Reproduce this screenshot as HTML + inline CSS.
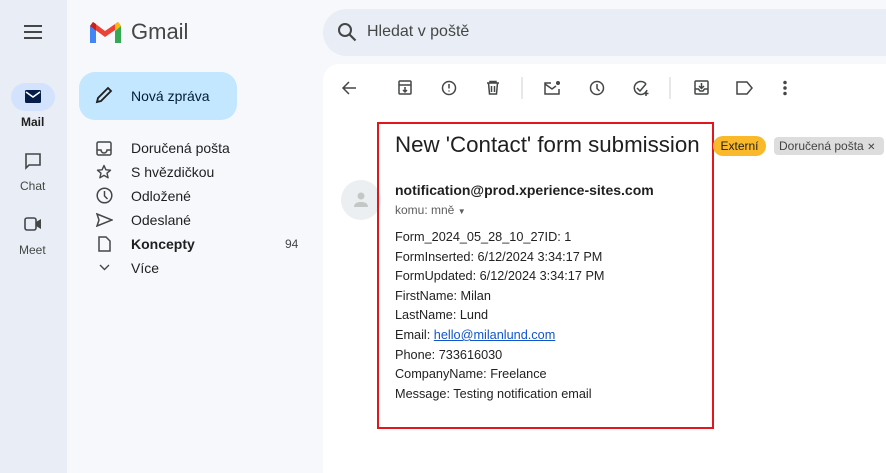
<!DOCTYPE html>
<html><head><meta charset="utf-8"><style>
*{margin:0;padding:0;box-sizing:border-box}
html,body{width:886px;height:473px;overflow:hidden}
body{background:#f6f8fc;font-family:"Liberation Sans",Arial,sans-serif;color:#1f1f1f;position:relative}
.rail{position:absolute;left:0;top:0;width:67px;height:473px;background:#e9eef6}
.abs{position:absolute}
.nav{position:absolute;left:131px;font-size:14px;color:#1f1f1f}
.ic{position:absolute;left:96px}
.panel{position:absolute;left:323px;top:64px;width:563px;height:409px;background:#fff;border-radius:16px 0 0 0}
.body div{font-size:12.7px;line-height:19.6px;color:#222}
</style></head><body>
<div class="rail"></div>
<svg class="abs" style="left:23px;top:24px" width="20" height="16"><path d="M1 2h18M1 8h18M1 14h18" stroke="#444746" stroke-width="2"/></svg>
<div class="abs" style="left:11px;top:83px;width:44px;height:28px;border-radius:14px;background:#d3e3fd"></div>
<svg class="abs" style="left:25px;top:90px" width="16" height="13"><rect width="16" height="13" rx="1.5" fill="#041e49"/><path d="M1 2l7 5 7-5" stroke="#fff" stroke-width="1.6" fill="none"/></svg>
<div class="abs" style="left:21px;top:115px;font-size:12px;font-weight:bold">Mail</div>
<svg class="abs" style="left:24px;top:152px" width="18" height="18"><path d="M2 2h14v11H5l-3 3z" stroke="#444746" stroke-width="1.6" fill="none"/></svg>
<div class="abs" style="left:20px;top:179px;font-size:12px;color:#444746">Chat</div>
<svg class="abs" style="left:24px;top:217px" width="18" height="14"><rect x="1" y="1" width="11" height="12" rx="2" stroke="#444746" stroke-width="1.6" fill="none"/><path d="M12 5l5-3v10l-5-3z" fill="#444746"/></svg>
<div class="abs" style="left:19px;top:243px;font-size:12px;color:#444746">Meet</div>

<svg class="abs" style="left:90px;top:22px" width="31" height="22"><path d="M0 4v17h6V9z" fill="#4285f4"/><path d="M25 9v12h6V4z" fill="#34a853"/><path d="M0 4l15 11L31 4 28 0 15 9 3 0z" fill="#ea4335"/><path d="M25 9l6-5-3-4-3 2z" fill="#fbbc04"/><path d="M0 4l6 5V2L3 0z" fill="#c5221f"/></svg>
<div class="abs" style="left:131px;top:19px;font-size:22px;color:#444746">Gmail</div>

<div class="abs" style="left:79px;top:72px;width:158px;height:48px;border-radius:16px;background:#c2e7ff"></div>
<svg class="abs" style="left:95px;top:86px" width="18" height="18"><path d="M2 16l1-4L13 2l3 3L6 15z" stroke="#1f1f1f" stroke-width="1.8" fill="none"/></svg>
<div class="abs" style="left:131px;top:88px;font-size:14px;color:#001d35">Nová zpráva</div>

<svg class="ic" style="top:141px" width="16" height="15"><rect x="1" y="1" width="14" height="13" rx="1.5" stroke="#444746" stroke-width="1.5" fill="none"/><path d="M1 9h4a3 3 0 006 0h4" stroke="#444746" stroke-width="1.5" fill="none"/></svg>
<div class="nav" style="top:140px">Doručená pošta</div>
<svg class="ic" style="top:164px" width="16" height="16"><path d="M8 1.5l1.9 4.3 4.6.4-3.5 3 1.1 4.6L8 11.4l-4.1 2.4L5 9.2l-3.5-3 4.6-.4z" stroke="#444746" stroke-width="1.4" fill="none" stroke-linejoin="round"/></svg>
<div class="nav" style="top:164px">S hvězdičkou</div>
<svg class="ic" style="top:187px" width="17" height="17"><circle cx="8.5" cy="8.5" r="7.3" stroke="#444746" stroke-width="1.5" fill="none"/><path d="M8.5 4v5l3 3" stroke="#444746" stroke-width="1.5" fill="none"/></svg>
<div class="nav" style="top:188px">Odložené</div>
<svg class="ic" style="top:213px" width="17" height="14"><path d="M1 1l15 6-15 6 2-6z" stroke="#444746" stroke-width="1.5" fill="none"/></svg>
<div class="nav" style="top:212px">Odeslané</div>
<svg class="ic" style="left:98px;top:236px" width="13" height="16"><path d="M1 1h7l4 4v10H1z" stroke="#444746" stroke-width="1.5" fill="none"/></svg>
<div class="nav" style="top:236px;font-weight:bold">Koncepty</div>
<div class="abs" style="left:285px;top:237px;font-size:12px;color:#444746">94</div>
<svg class="ic" style="left:99px;top:264px" width="11" height="7"><path d="M1 1l4.5 4.5L10 1" stroke="#444746" stroke-width="1.4" fill="none"/></svg>
<div class="nav" style="top:260px">Více</div>

<div class="abs" style="left:323px;top:9px;width:563px;height:47px;border-radius:24px 0 0 24px;background:#e9eef6"></div>
<svg class="abs" style="left:337px;top:22px" width="20" height="20"><circle cx="8" cy="8" r="6" stroke="#444746" stroke-width="2" fill="none"/><path d="M12.5 12.5l6 6" stroke="#444746" stroke-width="2.2"/></svg>
<div class="abs" style="left:367px;top:23px;font-size:16px;color:#444746">Hledat v poště</div>

<div class="panel"></div>
<svg class="abs" style="left:0;top:0" width="886" height="473" fill="none" stroke="#444746" stroke-width="1.5">
<path d="M356 88h-13M349 82l-6 6 6 6"/>
<rect x="399" y="81" width="12" height="13" rx="1"/><path d="M399 85h12M405 87v5M403 90l2 2 2-2"/>
<circle cx="449" cy="88" r="6.5"/><path d="M449 84v4.5M449 90.5v1"/>
<path d="M487 83h12M490 83v-1.5h6V83M488.5 83l1 11h7l1-11M491.5 86v6M494.5 86v6"/>
<path d="M522 77v22M670 77v22" stroke="#e0e0e0"/>
<path d="M551 83h-6v11h14v-5M545 84l7 5 4-3"/><circle cx="558" cy="83" r="2" fill="#444746" stroke="none"/>
<circle cx="597" cy="88" r="6.5"/><path d="M597 84v4.5l2.5 2.5"/>
<path d="M646 84a6.5 6.5 0 10 1 6M637 88l3 3 6-7M646 91v5M643.5 93.5h5"/>
<rect x="695" y="81" width="13" height="13" rx="1"/><path d="M695 89h3.5l1.5 2h3l1.5-2h3.5M701.5 83v5M699 86l2.5 2.5 2.5-2.5"/>
<path d="M737 82h10l5 6-5 6h-10z"/>
<circle cx="785" cy="82.5" r="1" fill="#444746"/><circle cx="785" cy="88" r="1" fill="#444746"/><circle cx="785" cy="93.5" r="1" fill="#444746"/>
</svg>

<div class="abs" style="left:341px;top:180px;width:40px;height:40px;border-radius:50%;background:#eceff1"></div>
<svg class="abs" style="left:352px;top:191px" width="18" height="18"><circle cx="9" cy="5" r="3.5" fill="#c4c7c5"/><path d="M2 16c0-4 3.5-5 7-5s7 1 7 5z" fill="#c4c7c5"/></svg>

<div class="abs" style="left:377px;top:122px;width:337px;height:307px;border:2px solid #e2161d"></div>
<div class="abs" style="left:395px;top:132px;font-size:22.3px;color:#1f1f1f">New 'Contact' form submission</div>
<div class="abs" style="left:713px;top:136px;width:53px;height:20px;border-radius:10px;background:#f9b92b;font-size:12px;color:#1f1f1f;line-height:20px;text-align:center">Externí</div>
<div class="abs" style="left:774px;top:137px;width:110px;height:18px;border-radius:4px;background:#ddd;font-size:12px;color:#444;line-height:18px;padding-left:5px">Doručená pošta <span style="font-size:10px">✕</span></div>
<div class="abs" style="left:395px;top:182px;font-size:14px;font-weight:bold">notification@prod.xperience-sites.com</div>
<div class="abs" style="left:395px;top:203px;font-size:12px;color:#5e5e5e">komu: mně <span style="font-size:8px">▼</span></div>
<div class="abs body" style="left:395px;top:228px">
<div>Form_2024_05_28_10_27ID: 1</div>
<div>FormInserted: 6/12/2024 3:34:17 PM</div>
<div>FormUpdated: 6/12/2024 3:34:17 PM</div>
<div>FirstName: Milan</div>
<div>LastName: Lund</div>
<div>Email: <span style="color:#1155cc;text-decoration:underline">hello@milanlund.com</span></div>
<div>Phone: 733616030</div>
<div>CompanyName: Freelance</div>
<div>Message: Testing notification email</div>
</div>
</body></html>
